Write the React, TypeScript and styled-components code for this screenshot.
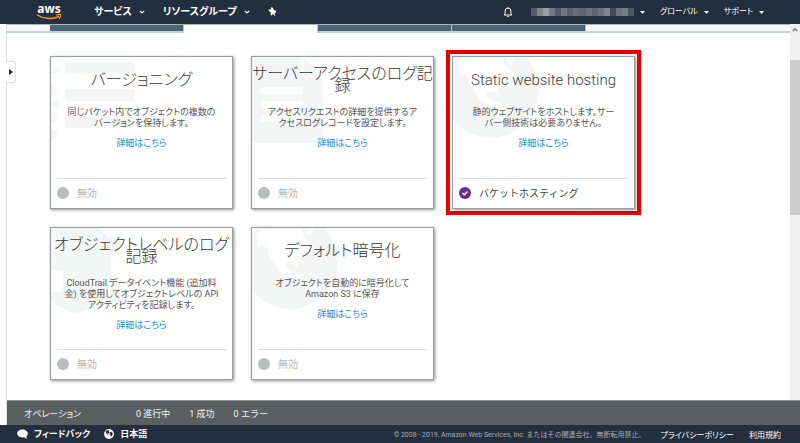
import React from "react";
import styled, { createGlobalStyle } from "styled-components";

const GlobalStyle = createGlobalStyle`
  * { box-sizing: border-box; }
  body {
    margin: 0;
    background: #fff;
    color: #444;
    font-family: Roboto, "Noto Sans CJK JP", sans-serif;
    font-size: 10px;
    overflow: hidden;
  }
  button { font: inherit; color: inherit; background: none; border: 0; padding: 0; cursor: pointer; }
  a { color: inherit; text-decoration: none; }
  ul { list-style: none; margin: 0; padding: 0; }
`;

const Page = styled.div`
  display: flex;
  flex-direction: column;
  height: 100vh;
`;

const Header = styled.header`
  display: flex;
  align-items: center;
  flex: 0 0 24px;
  padding: 0 36px;
  background: #232f3e;
  color: #fff;
`;

const NavButton = styled.button<{ $strong?: boolean; $gap: number }>`
  display: flex;
  align-items: center;
  gap: ${(p) => (p.$strong ? 7 : 6)}px;
  margin-left: ${(p) => p.$gap}px;
  font-size: ${(p) => (p.$strong ? 10 : 8)}px;
  font-weight: ${(p) => (p.$strong ? 700 : 400)};
  font-feature-settings: "palt";
  line-height: 14px;
  white-space: nowrap;
`;

const Spacer = styled.div`
  flex: 1;
`;

const Middle = styled.div`
  display: flex;
  flex: 1;
  min-height: 0;
`;

const Rail = styled.aside`
  position: relative;
  flex: 0 0 7px;
  border-right: 1px solid #dcdcdc;
`;

const RailToggle = styled.button`
  position: absolute;
  top: 37px;
  left: 6px;
  z-index: 1;
  display: flex;
  align-items: center;
  justify-content: center;
  width: 10px;
  height: 22px;
  background: #fff;
  border: 1px solid #dcdcdc;
  border-left: 0;
  border-radius: 0 3px 3px 0;
`;

const Column = styled.div`
  display: flex;
  flex: 1;
  flex-direction: column;
  min-width: 0;
`;

const ScrollRow = styled.div`
  display: flex;
  flex: 1;
  min-height: 0;
`;

const Content = styled.main`
  flex: 1;
  min-width: 0;
`;

const Tabs = styled.div`
  display: flex;
  height: 9px;
  padding-left: 43px;
  background: #f7f8f8;
  border-top: 1px solid #aab4ba;
  border-bottom: 2px solid #c5d0d5;
`;

const Tab = styled.button<{ $active?: boolean }>`
  width: 134px;
  height: ${(p) => (p.$active ? 8 : 6)}px;
  background: ${(p) => (p.$active ? "#fff" : "#4d6472")};
  border-right: 1px solid #b4c0c6;
`;

const Cards = styled.div`
  display: flex;
  flex-wrap: wrap;
  gap: 18px;
  padding: 23px 0 20px 43px;
`;

const Card = styled.section<{ $highlight?: boolean }>`
  position: relative;
  display: flex;
  flex-direction: column;
  width: 183px;
  height: 153px;
  padding: 0 6px;
  background: #fff;
  border: 1px solid #989c9c;
  box-shadow: 1px 1px 3px rgba(0, 0, 0, 0.45);
  outline: ${(p) => (p.$highlight ? "4px solid #e60000" : "none")};
  outline-offset: 2px;
`;

const Art = styled.svg`
  position: absolute;
  top: 0;
  left: 0;
  width: 86px;
  height: 86px;
  fill: #f4f6f6;
`;

const TitleBox = styled.div`
  position: relative;
  display: flex;
  align-items: center;
  height: 46px;
  margin: 0 -6px;
`;

const Title = styled.h2`
  width: 100%;
  margin: 0;
  color: #3a3a3a;
  font-size: 16px;
  font-weight: 300;
  font-feature-settings: "palt";
  line-height: 12px;
  text-align: center;

  &:lang(en) {
    font-size: 15px;
  }
`;

const Description = styled.p`
  position: relative;
  margin: 4px 0 0;
  color: #555;
  font-size: 9px;
  font-feature-settings: "palt";
  line-height: 11px;
  text-align: center;
  white-space: nowrap;
`;

const More = styled.a`
  position: relative;
  align-self: center;
  margin-top: 8px;
  color: #1e90d2;
  font-size: 9px;
  font-feature-settings: "palt";
  line-height: 12px;
`;

const Status = styled.div<{ $on?: boolean }>`
  display: flex;
  align-items: center;
  gap: 8px;
  height: 30px;
  margin-top: auto;
  padding-bottom: 2px;
  border-top: 1px solid #dedede;
  color: ${(p) => (p.$on ? "#444" : "#b4b7b7")};
  font-size: 10px;
`;

const ScrollTrack = styled.div`
  display: flex;
  flex: 0 0 10px;
  flex-direction: column;
  align-items: center;
  gap: 28px;
  padding-top: 3px;
  background: #f0f0f0;
`;

const ScrollThumb = styled.div`
  width: 10px;
  height: 155px;
  background: #cdcdcd;
`;

const Operations = styled.div`
  display: flex;
  align-items: center;
  flex: 0 0 25px;
  padding-left: 17px;
  border-top: 1px solid #8d9191;
  background: #5a5f5f;
  color: #f2f2f2;
  font-size: 9px;
`;

const OperationsLabel = styled.span`
  width: 112px;
  font-feature-settings: "palt";
`;

const Counts = styled.ul`
  display: flex;
  gap: 19px;
`;

const Footer = styled.footer`
  display: flex;
  align-items: center;
  flex: 0 0 18px;
  padding: 0 19px 0 17px;
  background: #232f3e;
  color: #fff;
`;

const FooterButton = styled.button`
  display: flex;
  align-items: center;
  gap: 6px;
  margin-right: 14px;
  font-size: 9px;
  font-weight: 700;
  font-feature-settings: "palt";
  line-height: 14px;
`;

const Copyright = styled.small`
  color: #a3abb3;
  font-size: 7px;
`;

const FooterLink = styled.a`
  margin-left: 15px;
  font-size: 8px;
  font-feature-settings: "palt";
`;

const AwsLogo = () => (
  <svg width="27" height="24" viewBox="0 0 27 24" role="img" aria-label="aws">
    <text x="13" y="13" textAnchor="middle" fontFamily="Open Sans" fontSize="12" fontWeight="700" fill="#fff">aws</text>
    <path d="M1.500 15C7 19 17 19.400 22.500 16.600" fill="none" stroke="#f90" strokeWidth="1.500" strokeLinecap="round" />
    <path d="M20.500 15c2-.7 3.700-.7 4.100-.2.400.6-.2 2.300-1.300 3.600" fill="none" stroke="#f90" strokeWidth="1.100" strokeLinecap="round" />
  </svg>
);

const Chevron = () => (
  <svg width="6" height="6" viewBox="0 0 6 6" aria-hidden="true">
    <path d="M.8 1.8 3 4l2.200-2.200" fill="none" stroke="#fff" strokeWidth="1.200" />
  </svg>
);

const Caret = () => (
  <svg width="5" height="5" viewBox="0 0 5 5" aria-hidden="true">
    <path d="M0 1h5L2.500 4z" fill="#fff" />
  </svg>
);

const Pin = () => (
  <svg width="9" height="10" viewBox="0 0 9 10" aria-hidden="true">
    <path d="M2.800.6 4.500.3 5.800 2.800 8.300 4.300 8 5.700 6.400 5.900 7.400 9.200 4.900 6.900 3.600 8.500 2.600 8 2.900 5.400.6 3.700.9 2.600 2.900 2.500z" fill="#fff" />
  </svg>
);

const Bell = () => (
  <svg width="10" height="12" viewBox="0 0 10 12" aria-hidden="true">
    <path d="M5 1.200v.8M1 9h8L7.900 7.500V5a2.900 2.900 0 0 0-5.800 0v2.500z" fill="none" stroke="#fff" strokeWidth="1" strokeLinejoin="round" />
    <path d="M3.800 10h2.400L5 11.200z" fill="#fff" />
  </svg>
);

const maskTones = [
  "#535d69", "#7f8790", "#98a0a6", "#747c86", "#525c69", "#707983", "#59636f",
  "#65707b", "#5c6672", "#68717c", "#5b6571", "#6a737e", "#7e868f", "#3f4a57",
  "#69727d", "#767f88", "#4d5865",
];

const AccountMask = () => (
  <svg width="103" height="8" viewBox="0 0 102 8" preserveAspectRatio="none" shapeRendering="crispEdges" role="img" aria-label="account">
    {maskTones.map((tone, i) => (
      <rect key={i} x={i * 6} width="6" height="8" fill={tone} />
    ))}
  </svg>
);

const RailArrow = () => (
  <svg width="4" height="6" viewBox="0 0 4 6" aria-hidden="true">
    <path d="M0 0v6l4-3z" fill="#222" />
  </svg>
);

const Dot = () => (
  <svg width="12" height="12" viewBox="0 0 12 12" aria-hidden="true">
    <circle cx="6" cy="6" r="6" fill="#babdbd" />
  </svg>
);

const CheckDot = () => (
  <svg width="12" height="12" viewBox="0 0 12 12" aria-hidden="true">
    <circle cx="6" cy="6" r="6" fill="#6b2e86" />
    <path d="m3.500 6 1.800 1.800 3.200-3.300" fill="none" stroke="#fff" strokeWidth="1.500" />
  </svg>
);

const Bubble = () => (
  <svg width="11" height="10" viewBox="0 0 11 10" aria-hidden="true">
    <path d="M5.500.5C2.500.5.2 2.200.2 4.500c0 2.200 2.300 3.900 5.300 3.900.6 0 1.200-.1 1.700-.2.8.8 1.900 1.300 2.900 1.300-.6-.7-.8-1.500-.8-2.200.9-.7 1.500-1.700 1.500-2.800C10.800 2.200 8.500.5 5.500.5z" fill="#fff" />
  </svg>
);

const GlobeSmall = () => (
  <svg width="10" height="10" viewBox="0 0 10 10" aria-hidden="true">
    <circle cx="5" cy="5" r="4.900" fill="#fff" />
    <path d="M1.500 2.300 3.500 1l1.800.5-.6 1.300 1 .8-1.400 1.200-1.200-.3.800 1.500-.5.5zM6 3.200l1.700-.3 1.100 1.600-1.200 2.700-1 .3-.3-1.700-.9-.6z" fill="#232f3e" />
  </svg>
);

type ArtKind = "list" | "document" | "globe" | "trail";

const art: Record<ArtKind, React.ReactNode> = {
  list: (
    <>
      <path d="M14 5h69v11H14zM14 32h69v12H14zM14 60h69v11H14z" />
      <path d="M0 13h7v3H0zM0 26c4 1 6 4 6 7s-2 6-6 7zM0 44h7v6H0zM0 54c4 1 6 3 6 6s-2 5-6 6zM0 71c4 1 6 4 6 7s-2 5-6 6z" />
    </>
  ),
  document: (
    <>
      <path fillRule="evenodd" d="M0 0h49v22h22v64H0zM9 30v7h42v-7zM9 44v7h42v-7zM9 58v7h42v-7z" />
      <path d="M52 1 70 19H52z" />
    </>
  ),
  globe: (
    <>
      <circle cx="38" cy="33" r="48" />
      <path fill="#fff" d="M4 5 9 2l6 1 6-2h29l2 8 5 5 5 5-4 4-5-1-3 6-5 3 1 9-5-6-7 1-1 4 5 4 10 4 5 9-4 1-6-5-9-5-7-4-5-8-5-7-1-7-4-4-6 2z" />
      <path fill="#fff" d="m53 1 9-1-3 7-5-1z" />
    </>
  ),
  trail: (
    <>
      <path d="M0 0h47l21 12v15h-8v27l8 2v18L22 86 0 74V64h12V42H0z" />
      <path fill="#fff" d="M52 0 60 4v7l-8-5z" />
    </>
  ),
};

interface Feature {
  title: string;
  lang?: string;
  lines: string[];
  status: string;
  on?: boolean;
  artwork: ArtKind;
}

const features: Feature[] = [
  { title: "バージョニング", lines: ["同じバケット内でオブジェクトの複数の", "バージョンを保持します。"], status: "無効", artwork: "list" },
  { title: "サーバーアクセスのログ記録", lines: ["アクセスリクエストの詳細を提供するア", "クセスログレコードを設定します。"], status: "無効", artwork: "document" },
  { title: "Static website hosting", lang: "en", lines: ["静的ウェブサイトをホストします。サー", "バー側技術は必要ありません。"], status: "バケットホスティング", on: true, artwork: "globe" },
  { title: "オブジェクトレベルのログ記録", lines: ["CloudTrail データイベント機能 (追加料", "金) を使用してオブジェクトレベルの API", "アクティビティを記録します。"], status: "無効", artwork: "trail" },
  { title: "デフォルト暗号化", lines: ["オブジェクトを自動的に暗号化して", "Amazon S3 に保存"], status: "無効", artwork: "globe" },
];

const FeatureCard = ({ title, lang = "ja", lines, status, on, artwork }: Feature) => (
  <Card $highlight={on}>
    <Art viewBox="0 0 86 86" aria-hidden="true">{art[artwork]}</Art>
    <TitleBox>
      <Title lang={lang}>{title}</Title>
    </TitleBox>
    <Description>
      {lines.map((line) => (
        <React.Fragment key={line}>
          {line}
          <br />
        </React.Fragment>
      ))}
    </Description>
    <More href="#details">詳細はこちら</More>
    <Status $on={on}>
      {on ? <CheckDot /> : <Dot />}
      {status}
    </Status>
  </Card>
);

export default function App() {
  return (
    <Page lang="ja">
      <GlobalStyle />
      <Header>
        <AwsLogo />
        <NavButton $strong $gap={31}>サービス<Chevron /></NavButton>
        <NavButton $strong $gap={18}>リソースグループ<Chevron /></NavButton>
        <NavButton $gap={18} aria-label="ピン留め"><Pin /></NavButton>
        <Spacer />
        <NavButton $gap={0} aria-label="通知"><Bell /></NavButton>
        <NavButton $gap={18}><AccountMask /><Caret /></NavButton>
        <NavButton $gap={15}>グローバル<Caret /></NavButton>
        <NavButton $gap={15}>サポート<Caret /></NavButton>
      </Header>
      <Middle>
        <Rail>
          <RailToggle aria-label="サイドバーを開く"><RailArrow /></RailToggle>
        </Rail>
        <Column>
          <ScrollRow>
            <Content>
              <Tabs role="tablist">
                <Tab role="tab" aria-selected="false" />
                <Tab role="tab" aria-selected="true" $active />
                <Tab role="tab" aria-selected="false" />
                <Tab role="tab" aria-selected="false" />
              </Tabs>
              <Cards>
                {features.map((feature) => (
                  <FeatureCard key={feature.title} {...feature} />
                ))}
              </Cards>
            </Content>
            <ScrollTrack>
              <svg width="6" height="5" viewBox="0 0 6 5" aria-hidden="true">
                <path d="M.8 4 3 1.800 5.200 4" fill="none" stroke="#777" strokeWidth="1.400" />
              </svg>
              <ScrollThumb />
            </ScrollTrack>
          </ScrollRow>
          <Operations>
            <OperationsLabel>オペレーション</OperationsLabel>
            <Counts>
              <li>0 進行中</li>
              <li>1 成功</li>
              <li>0 エラー</li>
            </Counts>
          </Operations>
        </Column>
      </Middle>
      <Footer>
        <FooterButton><Bubble />フィードバック</FooterButton>
        <FooterButton><GlobeSmall />日本語</FooterButton>
        <Spacer />
        <Copyright>© 2008 - 2019, Amazon Web Services, Inc. またはその関連会社。無断転用禁止。</Copyright>
        <FooterLink href="#privacy">プライバシーポリシー</FooterLink>
        <FooterLink href="#terms">利用規約</FooterLink>
      </Footer>
    </Page>
  );
}
